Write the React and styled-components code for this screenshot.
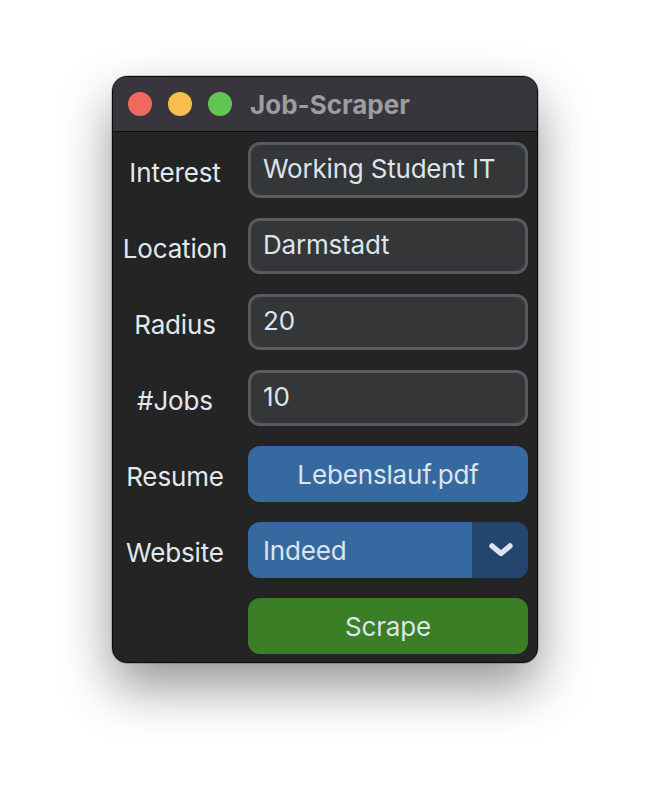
import React from 'react';
import styled, { createGlobalStyle } from 'styled-components';

/*-------------------- Styled Components --------------------*/

const GlobalStyle = createGlobalStyle`
  html, body {
    margin: 0;
    background: #ffffff;
  }
  body {
    font-family: "Inter", "Noto Sans", sans-serif;
  }
`;

// white desktop the window sits on
const Desktop = styled.div`
  display: flex;
  justify-content: center;
  padding-top: 76px;
  height: 812px;
  box-sizing: border-box;
`;

// the macOS window frame
const Window = styled.div`
  width: 426px;
  height: 587px;
  box-sizing: border-box;
  border-radius: 15px;
  overflow: hidden;
  background: #242424;
  border: 1px solid #0c0c0c;
  box-shadow: 0 0 0 0.5px rgba(0, 0, 0, 0.35), 0 24px 52px rgba(0, 0, 0, 0.42),
    inset 0 1px 0 rgba(255, 255, 255, 0.18);
  display: flex;
  flex-direction: column;
`;

const TitleBar = styled.div`
  height: 54px;
  flex-shrink: 0;
  background: #38363c;
  border-bottom: 1px solid #0e0e0e;
  display: flex;
  align-items: center;
  padding-left: 15px;
  gap: 15px;
`;

const Light = styled.span`
  width: 24px;
  height: 24px;
  border-radius: 50%;
  background: ${p => p.color};
`;

const Lights = styled.div`
  display: flex;
  gap: 16px;
`;

const Title = styled.span`
  font-size: 26px;
  font-weight: 700;
  color: #9e9ca3;
  margin-left: 3px;
`;

const Form = styled.div`
  display: grid;
  grid-template-columns: 123px 280px;
  column-gap: 12px;
  grid-auto-rows: 56px;
  row-gap: 20px;
  padding: 10px 10px 8px 0;
`;

const Label = styled.div`
  display: flex;
  align-items: center;
  justify-content: center;
  padding-top: 5px;
  padding-left: 1px;
  font-size: 26px;
  letter-spacing: -0.15px;
  color: #e2e8f0;
`;

const Entry = styled.div`
  box-sizing: border-box;
  border: 3px solid #565b5e;
  background: #343638;
  border-radius: 12px;
  display: flex;
  align-items: center;
  padding: 0 0 3px 12px;
  font-size: 26px;
  letter-spacing: -0.2px;
  color: #dce4ee;
`;

const Button = styled.div`
  border-radius: 12px;
  background: ${p => p.bg};
  display: flex;
  align-items: center;
  justify-content: center;
  font-size: 26px;
  letter-spacing: -0.15px;
  color: #dce4ee;
  grid-column: ${p => (p.wide ? '2' : 'auto')};
`;

const Select = styled.div`
  border-radius: 12px;
  overflow: hidden;
  display: flex;
  background: #3769a1;
`;

const SelectValue = styled.div`
  flex: 1;
  display: flex;
  align-items: center;
  padding-left: 15px;
  font-size: 26px;
  letter-spacing: -0.15px;
  color: #dce4ee;
`;

const SelectArrow = styled.div`
  width: 56px;
  box-sizing: border-box;
  background: #24466e;
  display: flex;
  align-items: center;
  justify-content: center;
  padding-left: 2px;
`;

/*-------------------- Functional Component --------------------*/

const fields = [
  { label: 'Interest', value: 'Working Student IT' },
  { label: 'Location', value: 'Darmstadt' },
  { label: 'Radius', value: '20' },
  { label: '#Jobs', value: '10' },
];

function Chevron() {
  return (
    <svg width="24" height="14" viewBox="0 0 24 14">
      <path
        d="M3 3 L12 10.5 L21 3"
        fill="none"
        stroke="#dce4ee"
        strokeWidth="5.5"
        strokeLinecap="round"
        strokeLinejoin="round"
      />
    </svg>
  );
}

export default function App() {
  return (
    <Desktop>
      <GlobalStyle />
      <Window>
        <TitleBar>
          <Lights>
            <Light color="#ee6a5f" />
            <Light color="#f5be4f" />
            <Light color="#62c655" />
          </Lights>
          <Title>Job-Scraper</Title>
        </TitleBar>
        <Form>
          {fields.map(f => (
            <React.Fragment key={f.label}>
              <Label>{f.label}</Label>
              <Entry>{f.value}</Entry>
            </React.Fragment>
          ))}
          <Label>Resume</Label>
          <Button bg="#3769a1">Lebenslauf.pdf</Button>
          <Label>Website</Label>
          <Select>
            <SelectValue>Indeed</SelectValue>
            <SelectArrow>
              <Chevron />
            </SelectArrow>
          </Select>
          <Button bg="#3a7f25" wide>
            Scrape
          </Button>
        </Form>
      </Window>
    </Desktop>
  );
}
